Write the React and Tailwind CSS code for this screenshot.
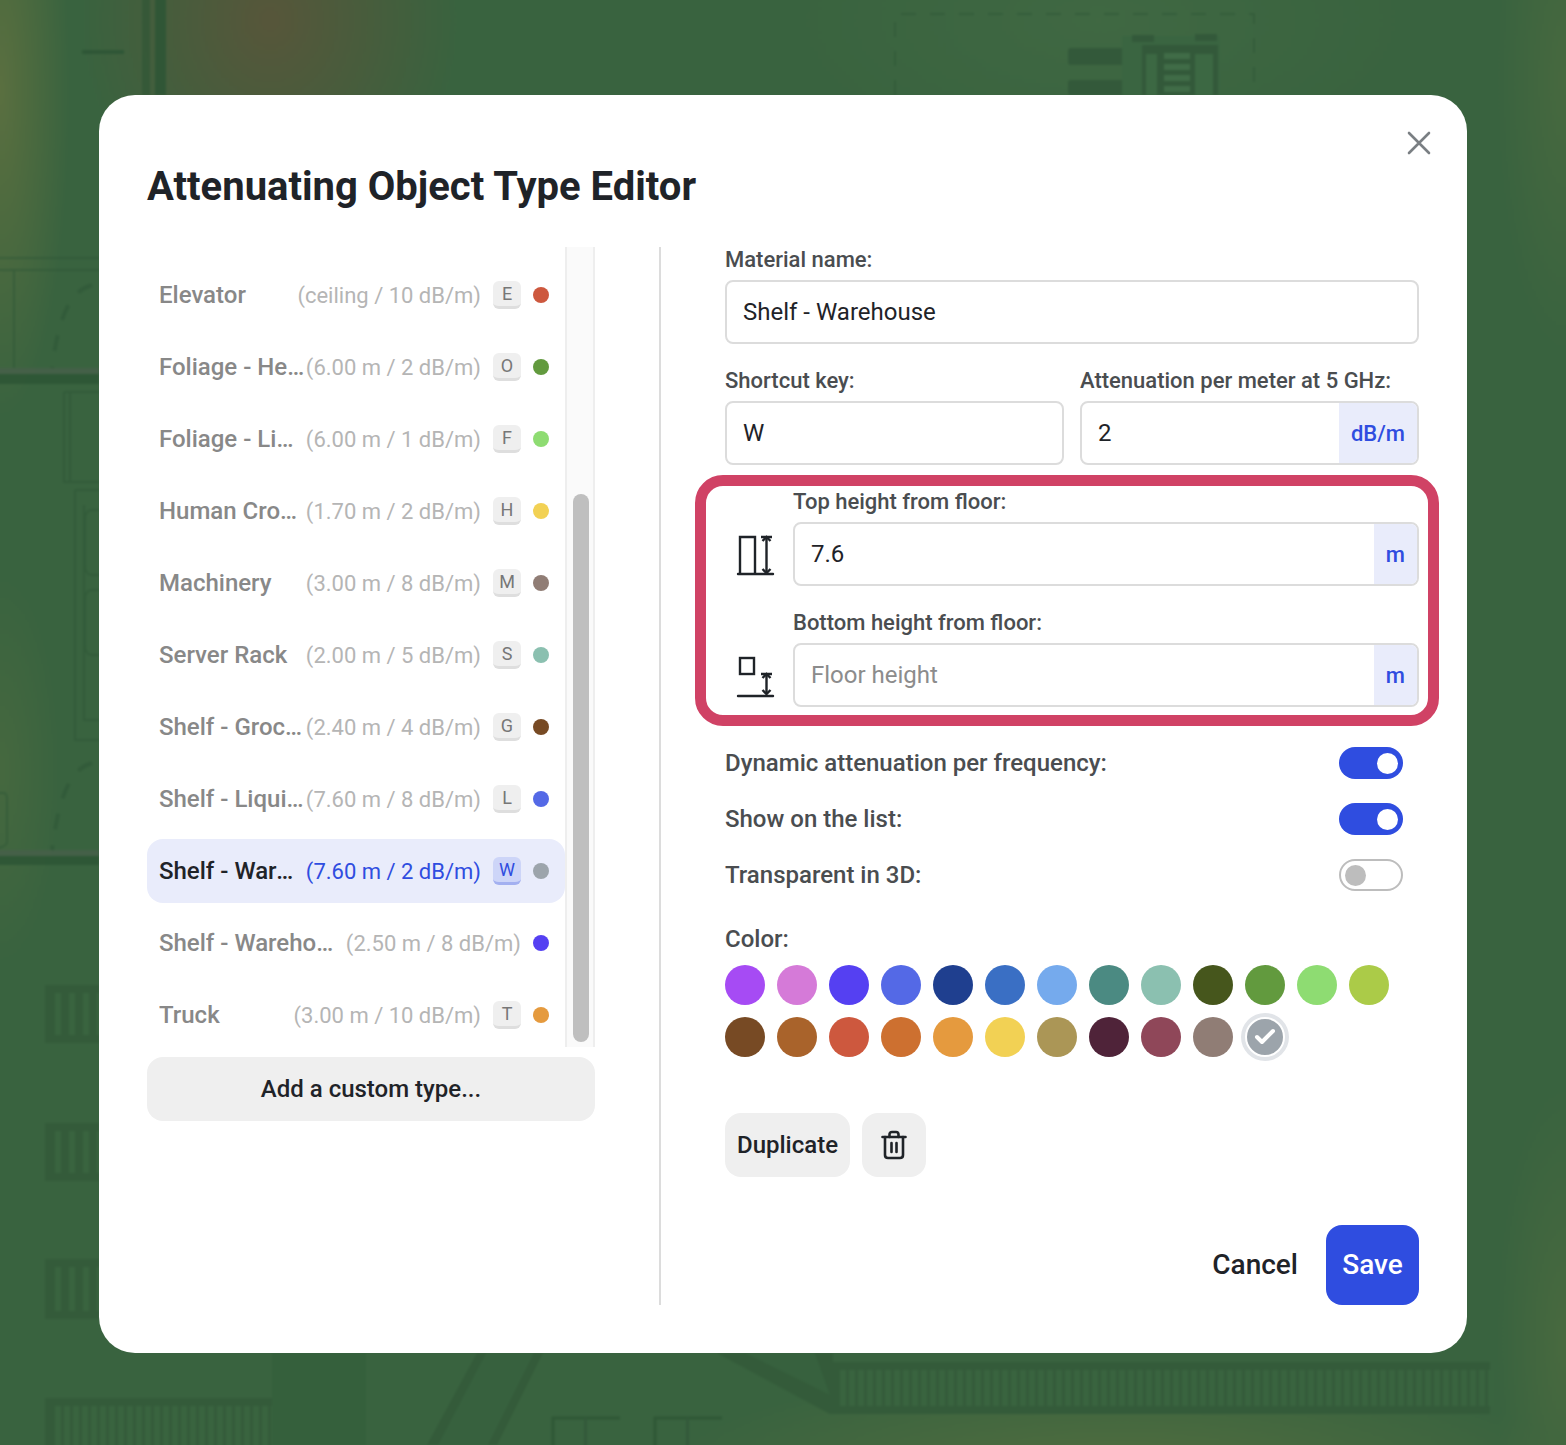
import React from "react";
import { Check } from "lucide-react";

const items = [
  { name: "Elevator", detail: "(ceiling / 10 dB/m)", key: "E", color: "bg-[#cd583e]" },
  { name: "Foliage - Heavy", detail: "(6.00 m / 2 dB/m)", key: "O", color: "bg-[#629a3e]" },
  { name: "Foliage - Light", detail: "(6.00 m / 1 dB/m)", key: "F", color: "bg-[#8edc72]" },
  { name: "Human Crowd", detail: "(1.70 m / 2 dB/m)", key: "H", color: "bg-[#f2d154]" },
  { name: "Machinery", detail: "(3.00 m / 8 dB/m)", key: "M", color: "bg-[#907d75]" },
  { name: "Server Rack", detail: "(2.00 m / 5 dB/m)", key: "S", color: "bg-[#8bc0b0]" },
  { name: "Shelf - Grocery", detail: "(2.40 m / 4 dB/m)", key: "G", color: "bg-[#774a24]" },
  { name: "Shelf - Liquids", detail: "(7.60 m / 8 dB/m)", key: "L", color: "bg-[#5469e6]" },
  { name: "Shelf - Warehouse", detail: "(7.60 m / 2 dB/m)", key: "W", color: "bg-[#9ca4ab]", active: true },
  { name: "Shelf - Warehouse (Metal)", detail: "(2.50 m / 8 dB/m)", color: "bg-[#5540f2]" },
  { name: "Truck", detail: "(3.00 m / 10 dB/m)", key: "T", color: "bg-[#e59a3e]" },
];

const row1 = ["bg-[#a64bf4]", "bg-[#d57ad8]", "bg-[#5540f2]", "bg-[#5469e6]", "bg-[#1f3f8f]", "bg-[#3a6fc4]", "bg-[#75aaed]", "bg-[#4b8a82]", "bg-[#8bc0b0]", "bg-[#46561c]", "bg-[#629a3e]", "bg-[#8edc72]", "bg-[#abcb48]"];
const row2 = ["bg-[#774a24]", "bg-[#a9632b]", "bg-[#cd583e]", "bg-[#cd7030]", "bg-[#e59a3e]", "bg-[#f2d154]", "bg-[#ab9656]", "bg-[#4f2339]", "bg-[#8f4759]", "bg-[#907d75]"];

function Backdrop() {
  const stripes = (x, y, w, h, step, sw, color = "#39643f") => {
    const out = [];
    for (let i = x; i < x + w; i += step) out.push(<rect key={i} x={i} y={y} width={sw} height={h} fill={color} />);
    return out;
  };
  const Block = ({ x, y, w, h, step = 14 }) => (
    <g>
      <rect x={x} y={y} width={w} height={h} fill="#345b3a" />
      {stripes(x + 10, y + 8, w - 10, h - 16, step, 6)}
    </g>
  );
  return (
    <svg className="absolute -left-4 -top-4 blur-[0.8px]" width="1598" height="1477" viewBox="-16 -16 1598 1477" aria-hidden="true">
      <defs>
        <radialGradient id="a">
          <stop offset="0" stopColor="#5c7040" stopOpacity="0.95" />
          <stop offset="1" stopColor="#5c7040" stopOpacity="0" />
        </radialGradient>
        <radialGradient id="b">
          <stop offset="0" stopColor="#57563a" stopOpacity="1" />
          <stop offset="1" stopColor="#57563a" stopOpacity="0" />
        </radialGradient>
        <radialGradient id="c">
          <stop offset="0" stopColor="#57703f" stopOpacity="0.85" />
          <stop offset="1" stopColor="#57703f" stopOpacity="0" />
        </radialGradient>
        <radialGradient id="d">
          <stop offset="0" stopColor="#4a7048" stopOpacity="0.4" />
          <stop offset="1" stopColor="#4a7048" stopOpacity="0" />
        </radialGradient>
      </defs>
      <rect x="-16" y="-16" width="1598" height="1477" fill="#39633f" />
      <ellipse cx="0" cy="90" rx="70" ry="330" fill="url(#a)" />
      <ellipse cx="270" cy="20" rx="190" ry="220" fill="url(#b)" />
      <ellipse cx="1566" cy="80" rx="70" ry="280" fill="url(#c)" opacity="0.55" />
      <ellipse cx="1120" cy="1475" rx="460" ry="110" fill="url(#c)" />
      <ellipse cx="1566" cy="1340" rx="70" ry="260" fill="url(#c)" opacity="0.6" />
      <ellipse cx="0" cy="770" rx="60" ry="200" fill="url(#c)" opacity="0.5" />
      <ellipse cx="1100" cy="20" rx="330" ry="150" fill="url(#d)" />

      <g fill="#2d5535" opacity="0.85">
        <rect x="142" y="-16" width="8" height="111" opacity="0.7" />
        <rect x="155" y="-16" width="11" height="111" />
        <rect x="82" y="50" width="42" height="4" />
        <rect x="-16" y="368" width="115" height="6" fill="#47604a" />
        <rect x="-16" y="374" width="115" height="10" />
        <rect x="-16" y="850" width="115" height="6" fill="#47604a" />
        <rect x="-16" y="856" width="115" height="9" />
      </g>

      <g>
        <rect x="1068" y="48" width="60" height="17" rx="3" fill="#33593a" />
        <rect x="1068" y="80" width="60" height="15" rx="3" fill="#33593a" />
        <rect x="1122" y="36" width="98" height="59" fill="#3a6541" />
        <rect x="1132" y="35" width="22" height="7" fill="#33593a" />
        <rect x="1195" y="34" width="22" height="7" fill="#33593a" />
        <rect x="1142" y="45" width="76" height="50" fill="#33593a" />
        <rect x="1146" y="54" width="11" height="41" fill="#3c6843" />
        <rect x="1164" y="53" width="26" height="6" fill="#406c47" />
        <rect x="1164" y="64" width="26" height="6" fill="#406c47" />
        <rect x="1164" y="75" width="26" height="6" fill="#406c47" />
        <rect x="1164" y="86" width="26" height="6" fill="#406c47" />
        <rect x="1195" y="54" width="18" height="41" fill="#3c6843" />
      </g>

      <g fill="none" stroke="#2f5737" strokeWidth="2" opacity="0.6">
        <path d="M895 95V14H1254V95" strokeDasharray="15 14" />
        <path d="M-16 258H99M-16 270H99" />
        <path d="M14 270V368" />
        <path d="M64 392H99M64 392V482H99M70 392V482" />
        <path d="M75 490H99M75 490V740H99M84 505V720H99" />
        <path d="M99 510H92Q85 510 85 520V565Q85 575 92 575H99M99 590H92Q85 590 85 600V645Q85 655 92 655H99" />
        <path d="M-16 793H4Q7 793 7 800V842Q7 849 -16 849" />
        <path d="M92 285C75 290 60 305 52 368" strokeWidth="4" strokeDasharray="16 16" />
        <path d="M92 763C75 768 60 785 52 850" strokeWidth="4" strokeDasharray="16 16" />
      </g>

      <Block x={45} y={985} w={54} h={58} />
      <Block x={45} y={1123} w={54} h={58} />
      <Block x={45} y={1259} w={54} h={60} />
      <Block x={45} y={1398} w={227} h={60} step={9} />
      <rect x="272" y="1353" width="94" height="92" fill="#35603c" />
      <path d="M477 1353H543L497 1445H427Z" fill="#345b3a" />
      <path d="M486 1353H534L488 1445H438Z" fill="#37613e" />
      <path d="M717 1353H833V1414H830Z" fill="#345b3a" />
      <path d="M745 1353H815L830 1395Z" fill="#37613e" />
      <Block x={830} y={1362} w={660} h={52} step={9} />
      <g fill="none" stroke="#2d5535" strokeWidth="3" opacity="0.8">
        <path d="M553 1460V1418H620" />
        <path d="M655 1460V1418H722" />
      </g>
      <g fill="#33593a">
        <rect x="584" y="1418" width="3" height="40" />
        <rect x="686" y="1418" width="3" height="40" />
      </g>
    </svg>
  );
}

function Field({ label, value, placeholder, unit }) {
  return (
    <div className="flex min-w-0 flex-1 flex-col gap-2">
      <label className="text-[22px] leading-[25px] font-medium text-[#4a4d50]">{label}</label>
      <div className="flex h-16 overflow-hidden rounded-lg border-2 border-[#dcdcdc] bg-white">
        <div className={`flex flex-1 items-center pl-4 text-[24px] ${value ? "text-[#1f2328]" : "text-[#8c8c8c]"}`}>{value || placeholder}</div>
        {unit && <div className="flex items-center bg-[#e9ecfb] px-3 text-[22px] font-medium text-[#2f4de0]">{unit}</div>}
      </div>
    </div>
  );
}

function Toggle({ label, on }) {
  return (
    <div className="flex h-8 items-center justify-between pr-4">
      <span className="text-[24px] font-medium text-[#4a4d50]">{label}</span>
      {on ? (
        <div className="flex h-8 w-16 items-center justify-end rounded-full bg-[#2f4de0] pr-[5px]">
          <div className="h-[21px] w-[21px] rounded-full bg-white" />
        </div>
      ) : (
        <div className="flex h-8 w-16 items-center rounded-full border-2 border-[#bdbdbd] pl-[4px]">
          <div className="h-[21px] w-[21px] rounded-full bg-[#bdbdbd]" />
        </div>
      )}
    </div>
  );
}

export default function App() {
  return (
    <div className="relative h-[1445px] w-full overflow-hidden pt-[95px] font-['Roboto',sans-serif]">
      <Backdrop />
      <div className="relative ml-[99px] flex h-[1258px] w-[1368px] flex-col rounded-[36px] bg-white px-12 pt-16">
        <button className="absolute right-[36px] top-[36px] text-[#7a7f83]" aria-label="Close">
          <svg width="24" height="24" viewBox="0 0 24 24" fill="none" stroke="currentColor" strokeWidth="2.6" strokeLinecap="round">
            <path d="M2 2L22 22M22 2L2 22" />
          </svg>
        </button>
        <h1 className="mb-[33px] pt-px text-[40px] leading-[54px] font-bold text-[#1f2328]">Attenuating Object Type Editor</h1>
        <div className="flex">
          <div className="w-[448px]">
            <div className="flex h-[800px] overflow-hidden">
              <div className="flex w-[418px] flex-col gap-2 pt-4">
                {items.map((it) => (
                  <div key={it.name} className={`flex h-16 shrink-0 items-center rounded-2xl pl-3 pr-4 ${it.active ? "bg-[#e9ecfb]" : ""}`}>
                    <span className={`min-w-0 flex-1 truncate pr-[1px] text-[24px] font-medium ${it.active ? "text-[#1f2328]" : "text-[#888888]"}`}>{it.name}</span>
                    <span className={`shrink-0 text-[22px] ${it.active ? "text-[#2f4de0]" : "text-[#b5b5b5]"}`}>{it.detail}</span>
                    {it.key && (
                      <span className={`ml-3 flex h-7 w-7 shrink-0 items-center justify-center rounded-md border-b-[3px] text-[18px] leading-none ${it.active ? "border-[#a3b0f0] bg-[#cdd5f8] text-[#2f4de0]" : "border-[#dedede] bg-[#efefef] text-[#777777]"}`}>{it.key}</span>
                    )}
                    <span className={`ml-3 h-4 w-4 shrink-0 rounded-full ${it.color}`} />
                  </div>
                ))}
              </div>
              <div className="flex w-[30px] flex-col justify-end border-x-2 border-[#eeeeee] bg-[#fafafa] pb-[5px] pl-[6px]">
                <div className="h-[548px] w-4 rounded-full bg-[#bfbfbf]" />
              </div>
            </div>
            <button className="mt-[10px] h-16 w-full rounded-2xl bg-[#efefef] text-[24px] font-medium text-[#1f2328]">Add a custom type...</button>
          </div>

          <div className="ml-16 h-[1058px] w-[2px] bg-[#dcdcdc]" />

          <div className="ml-16 flex w-[694px] flex-col">
            <Field label="Material name:" value="Shelf - Warehouse" />
            <div className="mt-6 flex gap-4">
              <Field label="Shortcut key:" value="W" />
              <Field label="Attenuation per meter at 5 GHz:" value="2" unit="dB/m" />
            </div>
            <div className="mt-[10px] -ml-[30px] -mr-5 flex flex-col gap-6 rounded-[28px] border-[11px] border-[#d04265] pl-[19px] pr-[9px] pt-[3px] pb-2">
              <div className="flex items-end">
                <svg className="mb-[6px] w-[68px] shrink-0" width="68" height="46" viewBox="0 0 68 46" fill="none" stroke="#1f2328" strokeWidth="2.4">
                  <path d="M15 40V3H30V40" />
                  <path d="M13 40H48" strokeLinecap="round" />
                  <path d="M36 3H47M41.5 3V39" />
                  <path d="M37.5 7L41.5 3L45.5 7M37.5 35L41.5 39L45.5 35" />
                </svg>
                <Field label="Top height from floor:" value="7.6" unit="m" />
              </div>
              <div className="flex items-end">
                <svg className="mb-[6px] w-[68px] shrink-0" width="68" height="46" viewBox="0 0 68 46" fill="none" stroke="#1f2328" strokeWidth="2.4">
                  <rect x="15" y="3" width="14" height="16" />
                  <path d="M13 41H48" strokeLinecap="round" />
                  <path d="M36 19H47M41.5 19V39" />
                  <path d="M37.5 23L41.5 19L45.5 23M37.5 35L41.5 39L45.5 35" />
                </svg>
                <Field label="Bottom height from floor:" placeholder="Floor height" unit="m" />
              </div>
            </div>
            <div className="mt-[21px] flex flex-col gap-6">
              <Toggle label="Dynamic attenuation per frequency:" on />
              <Toggle label="Show on the list:" on />
              <Toggle label="Transparent in 3D:" />
            </div>
            <div className="mt-[32px] text-[24px] leading-[32px] font-medium text-[#4a4d50]">Color:</div>
            <div className="mt-[10px] flex flex-col gap-3">
              <div className="flex gap-3">
                {row1.map((c) => <span key={c} className={`h-10 w-10 rounded-full ${c}`} />)}
              </div>
              <div className="flex gap-3">
                {row2.map((c) => <span key={c} className={`h-10 w-10 rounded-full ${c}`} />)}
                <span className="flex h-10 w-10 items-center justify-center rounded-full border-2 border-white bg-[#9ca4ab] shadow-[0_0_0_4px_#e1e4e8]">
                  <Check size={24} strokeWidth={4} color="#ffffff" />
                </span>
              </div>
            </div>
            <div className="mt-14 flex gap-3">
              <button className="h-16 w-[125px] rounded-2xl bg-[#efefef] text-[24px] font-medium text-[#1f2328]">Duplicate</button>
              <button className="flex h-16 w-16 items-center justify-center rounded-2xl bg-[#efefef]" aria-label="Delete">
                <svg width="26" height="30" viewBox="0 0 26 30" fill="none" stroke="#1f2328" strokeWidth="2.6" strokeLinecap="round" strokeLinejoin="round">
                  <path d="M1.5 7H24.5" />
                  <path d="M8.5 7V4.5Q8.5 2 11 2H15Q17.5 2 17.5 4.5V7" />
                  <path d="M4 7V25Q4 28 7 28H19Q22 28 22 25V7" />
                  <path d="M10.5 13V22M15.5 13V22" />
                </svg>
              </button>
            </div>
            <div className="mt-12 flex items-center justify-end gap-7">
              <button className="text-[28px] font-medium text-[#1f2328]">Cancel</button>
              <button className="h-20 w-[93px] rounded-2xl bg-[#2f4de0] text-[28px] font-medium text-white">Save</button>
            </div>
          </div>
        </div>
      </div>
    </div>
  );
}
